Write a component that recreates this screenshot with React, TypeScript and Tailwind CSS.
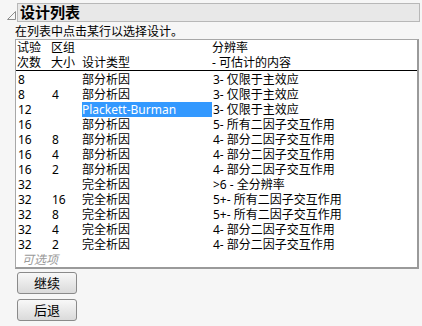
import React from "react";

const rows: [string, string, string, string][] = [
  ["8", "", "部分析因", "3- 仅限于主效应"],
  ["8", "4", "部分析因", "3- 仅限于主效应"],
  ["12", "", "Plackett-Burman", "3- 仅限于主效应"],
  ["16", "", "部分析因", "5- 所有二因子交互作用"],
  ["16", "8", "部分析因", "4- 部分二因子交互作用"],
  ["16", "4", "部分析因", "4- 部分二因子交互作用"],
  ["16", "2", "部分析因", "4- 部分二因子交互作用"],
  ["32", "", "完全析因", ">6 - 全分辨率"],
  ["32", "16", "完全析因", "5+- 所有二因子交互作用"],
  ["32", "8", "完全析因", "5+- 所有二因子交互作用"],
  ["32", "4", "完全析因", "4- 部分二因子交互作用"],
  ["32", "2", "完全析因", "4- 部分二因子交互作用"],
];

const font = { fontFamily: '"Noto Sans", "Noto Sans CJK SC", sans-serif' };

export default function App() {
  return (
    <div className="w-[422px] h-[326px] bg-[#f6f6f6] text-black overflow-hidden" style={font}>
      {/* outline header */}
      <div className="flex items-start pt-[3px]">
        <svg width="17" height="19" className="shrink-0">
          <polygon points="15.5,8.5 15.5,16.5 7.5,16.5" fill="none" stroke="#8c8c8c" strokeWidth="1" />
        </svg>
        <div className="w-[403px] h-[19px] bg-[#e8e8e8] border border-[#b8b8b8] flex items-center pl-[2px] text-[15px] font-bold leading-none">
          设计列表
        </div>
      </div>

      <div className="pl-[15px] mt-[3px] text-[12px] leading-[14px] h-[14px]">在列表中点击某行以选择设计。</div>

      {/* list box */}
      <div className="ml-[15px] w-[404px] h-[230px] bg-white border-l border-t border-[#a8a8a8] border-r-2 border-b-2 border-r-[#9a9a9a] border-b-[#9a9a9a] text-[12px] leading-[15px] overflow-hidden">
        <div className="border-b border-black">
          <div className="flex h-[15px]">
            <div className="w-[35px] pl-[1px]">试验</div>
            <div className="w-[31px]">区组</div>
            <div className="w-[130px]"></div>
            <div>分辨率</div>
          </div>
          <div className="flex h-[15px]">
            <div className="w-[35px] pl-[1px]">次数</div>
            <div className="w-[31px]">大小</div>
            <div className="w-[130px]">设计类型</div>
            <div>- 可估计的内容</div>
          </div>
        </div>
        <div className="pt-[1px]">
          {rows.map((r, i) => (
            <div key={i} className="flex h-[15px]">
              <div className="w-[35px] pl-[2px]">{r[0]}</div>
              <div className="w-[31px] pl-[1px]">{r[1]}</div>
              <div className={i === 2 ? "w-[130px] bg-[#3399ff] text-white" : "w-[130px]"}>{r[2]}</div>
              <div className="pl-[1px]">{r[3]}</div>
            </div>
          ))}
          <div className="h-[15px] pl-[6px] italic text-[#9a9a9a]">可选项</div>
        </div>
      </div>

      {/* buttons */}
      <div className="pl-[17px] pt-[3px] flex flex-col gap-[5px]">
        <button className="w-[60px] h-[22px] rounded-[3px] border border-[#8a8a8a] bg-gradient-to-b from-[#f8f8f8] to-[#dadada] text-[13px] leading-none">
          继续
        </button>
        <button className="w-[60px] h-[22px] rounded-[3px] border border-[#8a8a8a] bg-gradient-to-b from-[#f8f8f8] to-[#dadada] text-[13px] leading-none">
          后退
        </button>
      </div>
    </div>
  );
}
